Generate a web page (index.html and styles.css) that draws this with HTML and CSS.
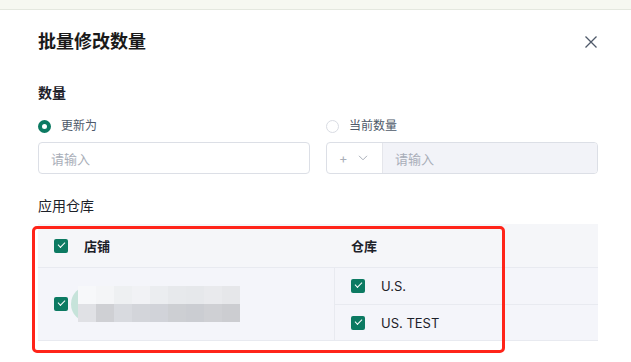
FILE: index.html
```html
<!DOCTYPE html>
<html lang="zh">
<head>
<meta charset="utf-8">
<link rel="stylesheet" href="styles.css">
</head>
<body>
<div class="topbar"></div>
<div class="modal">
  <div class="modal-head">
    <h1 class="title">批量修改数量</h1>
    <svg class="close" width="14" height="14" viewBox="0 0 14 14"><path d="M1.5 1.5L12.5 12.5M12.5 1.5L1.5 12.5" stroke="#4e5969" stroke-width="1.3" fill="none"/></svg>
  </div>

  <div class="label strong">数量</div>
  <div class="grid2 radios">
    <label class="radio"><span class="dot on"></span>更新为</label>
    <label class="radio"><span class="dot"></span>当前数量</label>
  </div>
  <div class="grid2 inputs">
    <div class="input"><span class="ph">请输入</span></div>
    <div class="input compound">
      <div class="sel"><span class="plus">+</span><svg width="10" height="6" viewBox="0 0 10 6"><path d="M1 0.8L5 4.8L9 0.8" stroke="#a9aeb8" stroke-width="1" fill="none"/></svg></div>
      <div class="num"><span class="ph">请输入</span></div>
    </div>
  </div>

  <div class="label section">应用仓库</div>

  <div class="table-wrap">
    <div class="table">
      <div class="thead">
        <div class="cell c1"><span class="cb"></span><span class="th">店铺</span></div>
        <div class="cell c2"><span class="th">仓库</span></div>
      </div>
      <div class="tbody">
        <div class="cell c1 store">
          <span class="cb"></span>
          <svg class="mosaic" width="170" height="36" viewBox="0 0 170 36">
            <circle cx="18" cy="18" r="18" fill="#c6e3da"/>
            <rect x="7" y="0" width="18" height="18" fill="#f7f8fa"/>
            <rect x="25" y="0" width="18" height="18" fill="#f4f5f7"/>
            <rect x="43" y="0" width="18" height="18" fill="#eef0f2"/>
            <rect x="61" y="0" width="18" height="18" fill="#f1f2f5"/>
            <rect x="79" y="0" width="18" height="18" fill="#ebedf0"/>
            <rect x="97" y="0" width="18" height="18" fill="#e7e9ec"/>
            <rect x="115" y="0" width="18" height="18" fill="#e6e8eb"/>
            <rect x="133" y="0" width="18" height="18" fill="#e9eaed"/>
            <rect x="151" y="0" width="18" height="18" fill="#e6e7ea"/>
            <rect x="7" y="18" width="18" height="18" fill="#e0e1e5"/>
            <rect x="25" y="18" width="18" height="18" fill="#cfd0d4"/>
            <rect x="43" y="18" width="18" height="18" fill="#d8dadf"/>
            <rect x="61" y="18" width="18" height="18" fill="#d3d5da"/>
            <rect x="79" y="18" width="18" height="18" fill="#d1d3d9"/>
            <rect x="97" y="18" width="18" height="18" fill="#cdcfd3"/>
            <rect x="115" y="18" width="18" height="18" fill="#cbcdd2"/>
            <rect x="133" y="18" width="18" height="18" fill="#cfd0d4"/>
            <rect x="151" y="18" width="18" height="18" fill="#cccdd1"/>
          </svg>
        </div>
        <div class="c2 whs">
          <div class="wh"><span class="cb"></span><span class="td">U.S.</span></div>
          <div class="wh"><span class="cb"></span><span class="td">US. TEST</span></div>
        </div>
      </div>
    </div>
    <div class="mark"></div>
  </div>
</div>
</body>
</html>
```

FILE: styles.css
```css
* { box-sizing: border-box; }
html, body { margin: 0; padding: 0; background: #ffffff; }
body {
  font-family: Inter, "Noto Sans CJK SC", sans-serif;
  color: #1d2129;
  width: 631px;
  height: 362px;
  overflow: hidden;
}
.topbar {
  height: 10px;
  background: #f6f8f1;
  border-bottom: 1px solid #e4e8df;
}
.modal {
  padding: 0 33px 0 38px;
}
.modal-head {
  display: flex;
  align-items: center;
  justify-content: space-between;
  padding-top: 22px;
  height: 42px;
}
.title {
  margin: 0;
  font-size: 18px;
  line-height: 20px;
  font-weight: 700;
  color: #1a1a1a;
}
.close { margin-right: 0px; }
.label {
  font-size: 14px;
  line-height: 20px;
}
.strong { font-weight: 700; margin-top: 31px; }
.grid2 {
  display: grid;
  grid-template-columns: 272px 272px;
  column-gap: 16px;
}
.radios { margin-top: 13px; height: 20px; }
.radio {
  display: flex;
  align-items: center;
  font-size: 12px;
  line-height: 20px;
  color: #4e5969;
}
.dot {
  width: 13px;
  height: 13px;
  border-radius: 50%;
  border: 1px solid #d9dce3;
  margin-right: 10px;
  background: #fff;
}
.dot.on {
  border: 4px solid #0c7a62;
}
.inputs { margin-top: 6px; }
.input {
  height: 32px;
  border: 1px solid #dcdfe6;
  border-radius: 4px;
  display: flex;
  align-items: center;
  padding-left: 12px;
  background: #fff;
}
.ph { font-size: 13px; color: #a9aeb8; }
.compound { padding-left: 0; overflow: hidden; }
.sel {
  width: 56px;
  height: 100%;
  display: flex;
  align-items: center;
  padding-left: 12px;
  gap: 10px;
  border-right: 1px solid #e5e6eb;
}
.plus { font-size: 13px; color: #a9aeb8; }
.num {
  flex: 1;
  height: 100%;
  background: #f2f3f8;
  display: flex;
  align-items: center;
  padding-left: 12px;
}
.section { margin-top: 22px; }
.table-wrap {
  position: relative;
  margin-top: 8px;
}
.table {
  background: #f5f6f9;
}
.thead {
  display: grid;
  grid-template-columns: 297px 1fr;
  height: 44px;
  border-bottom: 1px solid #e8eaf0;
}
.cell {
  display: flex;
  align-items: center;
  padding-left: 16px;
}
.th { font-size: 13px; font-weight: 700; color: #1d2129; }
.thead .c1 .cb { margin-right: 16px; }
.cb {
  width: 14px;
  height: 14px;
  border-radius: 2px;
  background: #0c7a62;
  display: inline-block;
  flex: none;
  position: relative;
}
.cb::after {
  content: "";
  position: absolute;
  left: 4px;
  top: 3px;
  width: 6px;
  height: 3px;
  border-left: 1.3px solid #fff;
  border-bottom: 1.3px solid #fff;
  transform: rotate(-45deg);
}
.tbody {
  display: grid;
  grid-template-columns: 297px 1fr;
  background: #f4f5fa;
}
.store {
  border-right: 1px solid #e8eaf0;
  border-bottom: 1px solid #e8eaf0;
}
.mosaic { margin-left: 3px; }
.whs { display: flex; flex-direction: column; }
.wh {
  display: flex;
  align-items: center;
  padding-left: 16px;
  border-bottom: 1px solid #e8eaf0;
}
.wh:first-child { height: 37px; }
.wh:last-child { height: 36px; }
.wh .cb { margin-right: 16px; }
.td { font-size: 13px; color: #1d2129; }
.mark {
  position: absolute;
  left: -6px;
  top: 2px;
  width: 473px;
  height: 127px;
  border: 3px solid #ff2419;
  border-radius: 5px;
  pointer-events: none;
}
```
